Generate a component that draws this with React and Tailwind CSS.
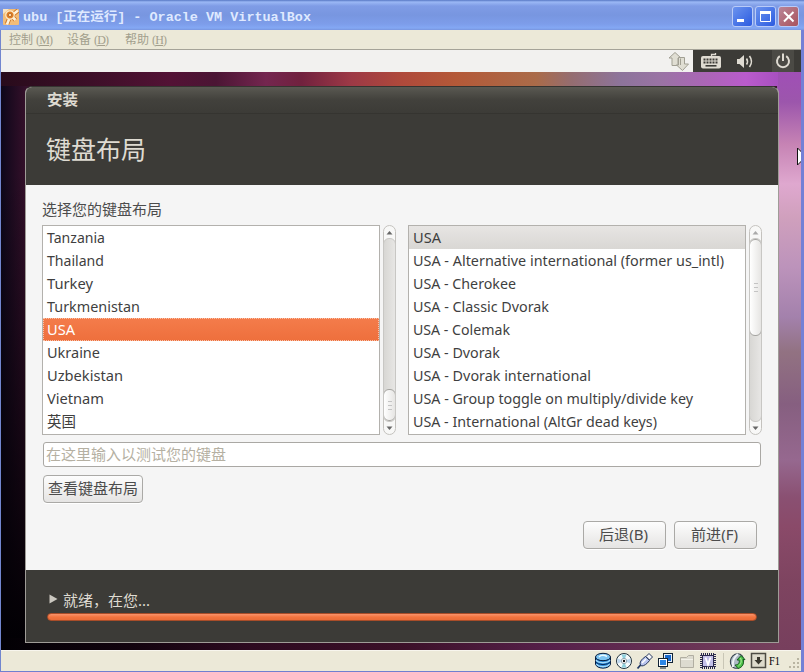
import React from "react";

const COUNTRIES = [
  ["Tanzania", 58], ["Thailand", 57], ["Turkey", 46], ["Turkmenistan", 93], ["USA", 28],
  ["Ukraine", 53], ["Uzbekistan", 76], ["Vietnam", 57], ["英国", 29],
];
const LAYOUTS = [
  ["USA", 28], ["USA - Alternative international (former us_intl)", 311], ["USA - Cherokee", 103],
  ["USA - Classic Dvorak", 136], ["USA - Colemak", 97], ["USA - Dvorak", 87],
  ["USA - Dvorak international", 178], ["USA - Group toggle on multiply/divide key", 280],
  ["USA - International (AltGr dead keys)", 244],
];

// Scales a line of text horizontally to a fixed advance width.
function Fit({ w, h, size, children, y, className = "" }) {
  return (
    <svg width={w + 2} height={h} className={"block shrink-0 overflow-visible " + className}>
      <text x="0" y={y} fontSize={size} fill="currentColor" textLength={w} lengthAdjust="spacingAndGlyphs">{children}</text>
    </svg>
  );
}

function ListBox({ items, className, selected, tone }) {
  return (
    <div className={"h-[210px] overflow-hidden border border-[#b3b1ad] bg-white " + className}>
      {items.map(([name, w], i) => (
        <div key={name} className={"flex h-[23px] items-center pl-1 " + (i === selected ? tone : "text-[#3f3f3f]")}>
          <Fit w={w} h={23} size={14.7} y={17}>{name}</Fit>
        </div>
      ))}
    </div>
  );
}

function Grip() {
  return (
    <div className="flex flex-col gap-[3px]">
      <i className="block h-px w-1 bg-[#c4c4c4]" /><i className="block h-px w-1 bg-[#c4c4c4]" /><i className="block h-px w-1 bg-[#c4c4c4]" />
    </div>
  );
}

function ScrollBar({ className, before, thumb, upDim }) {
  return (
    <div className={"flex h-[210px] w-[13px] flex-col items-center rounded-[7px] border border-[#c4c2be] bg-[#f8f8f7] " + className}>
      <svg width="11" height="12" className="shrink-0"><path d="M2.5 8.5 5.5 5l3 3.5z" fill={upDim ? "#aaa" : "#666"} /></svg>
      <div className="flex w-[13px] flex-1 flex-col items-center overflow-hidden rounded-[6px] border border-[#c8c7c4] bg-linear-to-r from-[#d8d7d4] to-[#e7e6e4]">
        <div className={"w-full shrink-0 " + before} />
        <div className={"-mx-px flex w-[13px] shrink-0 items-center justify-center rounded-[6px] border border-[#a5a4a1] bg-linear-to-r from-white to-[#e6e5e3] " + thumb}><Grip /></div>
      </div>
      <svg width="11" height="12" className="shrink-0"><path d="M2.5 4.5 5.500 8l3-3.500z" fill="#666" /></svg>
    </div>
  );
}

function Button({ children, className }) {
  return (
    <button className={"flex h-7 items-center justify-center rounded-[4px] border border-[#aaa9a6] bg-linear-to-b from-[#fdfdfd] to-[#e5e4e3] text-[15px] leading-none shadow-[0_1px_0_#fff] " + className}>
      {children}
    </button>
  );
}

function AppIcon() {
  return (
    <svg width="16" height="16" viewBox="0 0 16 16" className="shrink-0">
      <rect width="16" height="16" rx="1" fill="#f3bd78" />
      <path d="M0 5 6 0H0z" fill="#f8e4c4" />
      <path d="M6.500 9 4 15M9.500 8l3 3M10 5.500l5-4" stroke="#cf7626" strokeWidth="4.500" />
      <path d="M6.500 9 4 15.500M9.500 8l3 3M10 5.500l5-4" stroke="#fdf3dd" strokeWidth="2.600" />
      <circle cx="7" cy="6" r="4.200" fill="#e07f25" stroke="#fdeccb" strokeWidth="1.200" />
      <circle cx="7" cy="6" r="1.700" fill="#ffdb9e" stroke="#a8531a" strokeWidth=".7" />
    </svg>
  );
}

function WinButton({ tone, children }) {
  return (
    <div className={"h-[21px] w-[21px] rounded-[3px] border border-[#b9cbf8] " + tone}>
      <svg width="19" height="19" viewBox="0 0 19 19">{children}</svg>
    </div>
  );
}

function StatusIcons() {
  return (
    <div className="flex items-center">
      <svg width="21" height="18" viewBox="0 0 21 18">
        <path d="M2.500 5v7c1 5.500 14 5.500 15 0V5" fill="#2688d8" stroke="#061a3a" />
        <path d="M3 8c2 3.500 12 3.500 14 0M3.500 12c2 3.500 11 3.500 13 0" fill="none" stroke="#a8dcf8" strokeWidth="1.500" />
        <path d="M2.500 9.500c2 4 13 4 15 0" fill="none" stroke="#082958" />
        <ellipse cx="10" cy="5" rx="7.500" ry="3.700" fill="#7cc4f2" stroke="#061a3a" />
        <path d="M6 5c2-2 5-2 8-.5" stroke="#e8faff" strokeWidth="1.500" fill="none" />
      </svg>
      <svg width="21" height="18" viewBox="0 0 21 18">
        <circle cx="10" cy="9" r="7.500" fill="#f4fafb" stroke="#20313c" />
        <path d="M10 9 7.500 2.500h5zM10 9l2.500 6.500h-5z" fill="#8fd0dc" />
        <path d="M10 9 3.500 6.500v5zM10 9l6.500-2.500v5z" fill="#bcd6ee" />
        <circle cx="10" cy="9" r="2.700" fill="#fff" stroke="#6c8794" strokeWidth=".7" /><circle cx="10" cy="9" r="1.200" fill="#111" />
      </svg>
      <svg width="21" height="18" viewBox="0 0 21 18">
        <path d="m2.500 16.500 3.500-4" stroke="#223a66" strokeWidth="1.800" />
        <path d="M5 12c0-3 2-5 5.500-7.500l4 4C12 12 9 14 6.500 14z" fill="#b9c4ee" stroke="#26375c" />
        <path d="m11 4.500 3-3 3.500 3.500-3 3z" fill="#f4f5fa" stroke="#26375c" />
        <path d="m7 11 4-4" stroke="#fff" strokeWidth="1.500" />
      </svg>
      <svg width="21" height="18" viewBox="0 0 21 18">
        <rect x="7.500" y="1.500" width="9" height="9" fill="#e8f0fa" stroke="#123" /><rect x="9" y="3" width="6" height="6" fill="#1668cc" />
        <rect x="2.500" y="6.500" width="9" height="8" fill="#fff" stroke="#123" /><rect x="4" y="8" width="6" height="5" fill="#2b86e6" />
        <path d="M4 16h6" stroke="#123" />
      </svg>
      <svg width="21" height="18" viewBox="0 0 21 18"><path d="M3.500 15.500v-10h6l2-2h5v12z" fill="#dddbd0" stroke="#b1aea2" /><path d="M4 7.500h12" stroke="#f4f2ea" /></svg>
      <svg width="21" height="18" viewBox="0 0 21 18">
        <rect x="3" y="2" width="14" height="14" fill="none" stroke="#29294c" strokeWidth="2" strokeDasharray="1 1" />
        <rect x="4.500" y="3.500" width="11" height="11" fill="#c3c0e8" stroke="#29294c" />
        <path d="m7.500 5.500 2.500 7 2.500-7" fill="none" stroke="#fff" strokeWidth="1.800" />
      </svg>
      <div className="mx-1 h-4 w-px bg-[#c9c6b6]" />
      <svg width="21" height="18" viewBox="0 0 21 18">
        <ellipse cx="9" cy="9" rx="6.500" ry="7.500" transform="rotate(25 9 9)" fill="#aeb9c5" stroke="#36414c" />
        <path d="M10 2c-4 3-6 7-5 13" fill="none" stroke="#edf2f5" strokeWidth="2" />
        <path d="M9 8 13 3.500l4 4h-2c1.500 4-.5 8-5 9l-3-3.500c3 0 5-2 4-5z" fill="#4cc048" stroke="#14571d" strokeWidth=".9" />
        <path d="M12.500 6c1.500 3 .5 6-2 8" fill="none" stroke="#b9f0a8" />
      </svg>
      <svg width="20" height="18" viewBox="0 0 20 18">
        <rect x="2.500" y="1.500" width="14" height="14" fill="#dedbcc" stroke="#4e4c44" strokeWidth="1.500" />
        <path d="M8 5h3v3h2.500l-4 4.500-4-4.500H8z" fill="#3a382f" />
      </svg>
    </div>
  );
}

export default function App() {
  return (
    <div className="flex h-[672px] w-[804px] flex-col overflow-hidden bg-[#ece9d8] font-['Noto_Sans','Noto_Sans_CJK_SC',sans-serif]">
      <header className="flex h-[30px] shrink-0 items-center bg-[linear-gradient(#5878c4_0,#9bb8f5_2px,#7f9ce6_6px,#7896e0_15px,#7d9dea_24px,#84a8f4_28px,#7895df_30px)] pl-[3px] pr-[5px] pt-[3px] font-['Liberation_Mono','Noto_Sans_CJK_SC',monospace] text-white">
        <AppIcon />
        <Fit w={288} h={22} size={12.5} y={15} className="ml-1 font-bold text-[#dfe9ff]">ubu [正在运行] - Oracle VM VirtualBox</Fit>
        <div className="ml-auto flex gap-[2px]">
          <WinButton tone="bg-linear-to-br from-[#6c93ee] to-[#2c5ae0]"><path d="M4 12h7v3H4z" fill="#fff" /></WinButton>
          <WinButton tone="bg-linear-to-br from-[#6c93ee] to-[#2c5ae0]"><path d="M4.500 5v9.500h10V5" fill="none" stroke="#fff" /><path d="M4 4h11v3H4z" fill="#fff" /></WinButton>
          <WinButton tone="bg-linear-to-br from-[#b98598] to-[#a9525c]"><path d="m5 5 9.500 9.500m0-9.500L5 14.500" stroke="#fff" strokeWidth="2" /></WinButton>
        </div>
      </header>

      <div className="flex min-h-0 flex-1 flex-col border-b border-l border-b-[#6f7fd0] border-l-[#7286cf] border-r-[3px] border-r-[#7480d6]">
        <nav className="flex h-5 shrink-0 items-center gap-[17px] border-b border-[#a5a398] bg-[#ece9d8] pl-2 font-['Liberation_Serif','Noto_Sans_CJK_SC',serif] text-[#a29f8d]">
          {[["控制", "M"], ["设备", "D"], ["帮助", "H"]].map(([t, k]) => (
            <span key={k} className="flex w-[41px] items-center whitespace-nowrap text-[12px] leading-[18px]">
              {t}<span className="ml-[3px] text-[12px] tracking-[-0.8px]">(<u>{k}</u>)</span>
            </span>
          ))}
        </nav>

        <div className="flex h-[22px] shrink-0 justify-end bg-[#f2f1ef]">
          <svg width="25" height="22" viewBox="0 0 25 22" fill="#e0ded3" stroke="#a19f93">
            <path d="m7 2.500 6 5.500h-3v7.500H4V8H1z" /><path d="M10.500 7.500h6V14h4l-6 6.500L8.500 15h2z" /><path d="M12.500 8.500V15" />
          </svg>
          <div className="flex w-[108px] bg-[#3c3b37] text-[#dfdbd2]">
            <svg width="36" height="22" viewBox="0 0 36 22">
              <path d="M18.500 6V4.500h4V3" stroke="currentColor" strokeWidth="1.300" fill="none" />
              <rect x="8" y="6" width="20" height="12.500" rx="2" fill="currentColor" />
              <path d="M10.500 9.500h15M10.500 12.500h15" stroke="#3c3b37" strokeWidth="2" strokeDasharray="2 1" /><path d="M12.500 15.800h11" stroke="#3c3b37" strokeWidth="1.600" />
            </svg>
            <svg width="43" height="22" viewBox="0 0 43 22" fill="none" stroke="currentColor">
              <path d="M8 9h2.500L15 5v13l-4.500-4H8z" fill="currentColor" stroke="none" />
              <path d="M17.500 8.500q2 3 0 6M20.500 6q4 5.500 0 11" strokeWidth="1.600" />
            </svg>
            <div className="flex w-[22px] items-center justify-center bg-[#4b4a45]">
              <svg width="18" height="18" viewBox="0 0 18 18" fill="none" stroke="currentColor" strokeWidth="2"><path d="M5.800 4.200a6 6 0 1 0 6.400 0M9 1.500V9" /></svg>
            </div>
          </div>
        </div>

        <main className="relative flex h-[578px] shrink-0 items-start bg-[#3a1530] bg-[image:linear-gradient(90deg,#280b1b_0,#3d0f28_90px,#531235_170px,#4b1534_215px,#74264f_265px,#71213e_300px,#9d3946_350px,#af493b_400px,#b45938_455px,#aa6b49_535px,#956d70_570px,#8d749b_620px,#9a73a4_660px,#ad64b9_710px,#b95bcc_745px,#a850c0_777px),linear-gradient(90deg,#020004_0,#12030e_130px,#2d0a20_250px,#3b1028_400px,#56204a_550px,#75405c_777px),linear-gradient(#a04fb6_0,#9c56ac_30px,#c683b4_72px,#dfa8cf_112px,#d0a0bd_145px,#bc93bb_195px,#a381ac_245px,#927282_280px,#865f80_332px,#96688f_388px,#8a5072_425px,#8a4a69_455px,#7e4460_510px,#773f5d_578px),linear-gradient(90deg,#0d0719_0,#35102a_25px)] bg-[size:777px_14px,777px_12px,24px_100%,40px_100%] bg-[position:0_0,0_100%,100%_0,0_0] bg-no-repeat pl-6 pt-[14px]">
          <div className="pointer-events-none absolute left-0 top-[100px] h-[466px] w-6 bg-linear-to-b from-transparent to-[#020004]" />
          <section className="flex h-[557px] w-[754px] flex-col overflow-hidden rounded-t-[7px] border border-[#9f9c97] border-t-[#353431] bg-[#f5f5f5] text-[#4c4c4c]">
            <div className="h-[27px] shrink-0 border-b border-[#353430] bg-linear-to-b from-[#5a5952] via-[#42413c] to-[#3c3b37] pl-[21px] font-bold text-[#dfdbd2]">
              <Fit w={31} h={25} size={15} y={18}>安装</Fit>
            </div>
            <h1 className="flex h-[71px] shrink-0 items-center bg-[#3c3b37] pl-5 text-[#dfdbd2]">
              <Fit w={100} h={71} size={25} y={45}>键盘布局</Fit>
            </h1>
            <div className="flex h-[385px] shrink-0 flex-col pl-4">
              <div className="flex h-10 items-end"><Fit w={120} h={30} size={14.5} y={20}>选择您的键盘布局</Fit></div>
              <div className="flex">
                <ListBox items={COUNTRIES} selected={4} className="w-[338px]" tone="bg-linear-to-b from-[#f47c4b] to-[#ee6f3c] text-white outline-1 outline-dotted -outline-offset-1 outline-[#f9c2aa]" />
                <ScrollBar className="ml-[3px]" before="h-[150px]" thumb="h-8" />
                <ListBox items={LAYOUTS} selected={0} className="ml-3 w-[338px]" tone="bg-linear-to-b from-[#e7e5e3] to-[#d9d7d4] text-[#3f3f3f]" />
                <ScrollBar className="ml-[3px]" before="h-0" thumb="h-[97px]" upDim />
              </div>
              <div className="ml-px mt-[7px] flex h-[25px] w-[718px] items-center rounded-[3px] border border-[#aaa8a4] bg-white pl-[2px] text-[#b5b0a2]">
                <Fit w={180} h={23} size={15} y={17}>在这里输入以测试您的键盘</Fit>
              </div>
              <Button className="ml-px mt-2 w-[100px]"><Fit w={90} h={26} size={15} y={18} className="ml-px">查看键盘布局</Fit></Button>
              <div className="ml-[541px] mt-[18px] flex gap-2">
                <Button className="w-[83px]"><Fit w={49} h={26} size={15} y={18}>后退(B)</Fit></Button>
                <Button className="w-[83px]"><Fit w={47} h={26} size={15} y={18}>前进(F)</Fit></Button>
              </div>
            </div>
            <footer className="flex min-h-0 flex-1 flex-col bg-[#3c3b37] pl-[21px] pt-5 text-[#dfdbd2]">
              <div className="flex h-[22px] items-center gap-[5px] pl-[2px]">
                <svg width="9" height="10" className="-mt-1"><path d="M.5.500 8.500 5l-8 4.500z" fill="#cbc8c0" /></svg>
                <Fit w={87} h={22} size={14.5} y={16}>就绪，在您...</Fit>
              </div>
              <div className="mt-[1px] h-[8px] w-[710px] rounded-[4px] border border-[#a94d29] bg-linear-to-b from-[#f9936a] via-[#f2743f] to-[#ea6c38]" />
            </footer>
          </section>
          <svg width="5" height="19" viewBox="0 0 5 19" className="absolute right-0 top-[75px]"><path d="M1.500 1v17l4-4V5z" fill="#fff" stroke="#111" /></svg>
        </main>

        <div className="flex min-h-0 flex-1 items-center justify-end border-t border-[#f8f6ee] bg-[#ece9d8] font-['Liberation_Serif',serif] text-[12px] text-black">
          <StatusIcons />
          <Fit w={11} h={18} size={12} y={13}>F1</Fit>
          <svg width="19" height="20" viewBox="0 0 19 20" fill="#b9b5a2"><path d="M15 7h2v2h-2zM15 11h2v2h-2zM11 11h2v2h-2zM15 15h2v2h-2zM11 15h2v2h-2zM7 15h2v2H7z" /></svg>
        </div>
      </div>
    </div>
  );
}
